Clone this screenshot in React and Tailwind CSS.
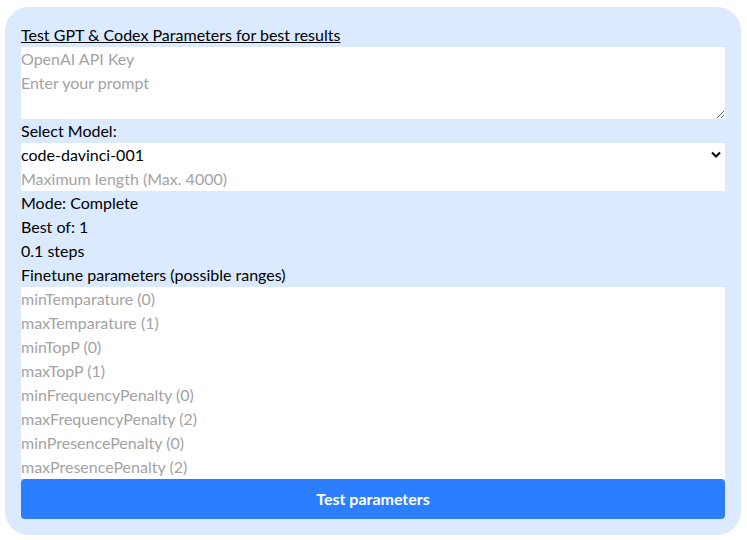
import React from 'react';

const ranges = [
    'minTemparature (0)',
    'maxTemparature (1)',
    'minTopP (0)',
    'maxTopP (1)',
    'minFrequencyPenalty (0)',
    'maxFrequencyPenalty (2)',
    'minPresencePenalty (0)',
    'maxPresencePenalty (2)',
];

const App = () => {
    return (
        <div className="p-[5px] pt-[7px] font-['Lato',sans-serif] text-base text-black">
            <div className="w-[736px] rounded-[24px] bg-blue-100 p-4">
                <h1 className="leading-6 underline">Test GPT &amp; Codex Parameters for best results</h1>
                <input
                    type="text"
                    placeholder="OpenAI API Key"
                    className="block h-6 w-full bg-white leading-6 outline-none placeholder:text-[#a3a3a3]"
                />
                <textarea
                    placeholder="Enter your prompt"
                    className="block h-12 w-full bg-white leading-6 outline-none placeholder:text-[#a3a3a3]"
                />
                <label className="block leading-6">Select Model:</label>
                <div className="relative h-6 overflow-hidden bg-white">
                    <select className="block h-6 w-full appearance-none bg-white py-0 leading-6 outline-none">
                        <option>code-davinci-001</option>
                    </select>
                    <svg
                        className="pointer-events-none absolute right-[4px] top-[8px]"
                        width="10"
                        height="8"
                        viewBox="0 0 10 8"
                    >
                        <path d="M1 1.5 L5 5.5 L9 1.5" fill="none" stroke="#111" strokeWidth="2.2" />
                    </svg>
                </div>
                <input
                    type="number"
                    placeholder="Maximum length (Max. 4000)"
                    className="block h-6 w-full bg-white leading-6 outline-none placeholder:text-[#a3a3a3]"
                />
                <p className="leading-6">Mode: Complete</p>
                <p className="leading-6">Best of: 1</p>
                <p className="leading-6">0.1 steps</p>
                <p className="leading-6">Finetune parameters (possible ranges)</p>
                <div className="bg-white">
                    {ranges.map((r) => (
                        <input
                            key={r}
                            type="number"
                            placeholder={r}
                            className="block h-6 w-full bg-white leading-6 outline-none placeholder:text-[#a3a3a3]"
                        />
                    ))}
                </div>
                <button className="block h-10 w-full rounded bg-blue-500 font-bold text-white">
                    Test parameters
                </button>
            </div>
        </div>
    );
};

export default App;
